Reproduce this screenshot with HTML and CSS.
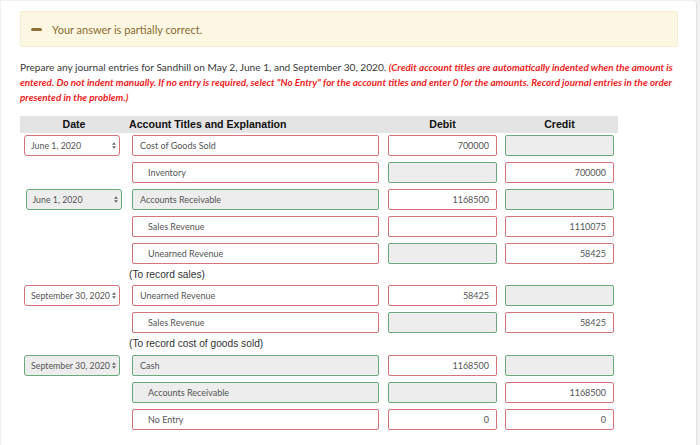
FILE: index.html
```html
<!DOCTYPE html>
<html lang="en">
<head>
<meta charset="utf-8">
<title>Journal entries</title>
<link rel="stylesheet" href="styles.css">
</head>
<body>
<div class="card">
  <div class="banner">
    <span class="minus"></span>
    <span class="banner-text">Your answer is partially correct.</span>
  </div>
  <p class="instructions">Prepare any journal entries for Sandhill on May 2, June 1, and September 30, 2020. <em class="note">(Credit account titles are automatically indented when the amount is entered. Do not indent manually. If no entry is required, select "No Entry" for the account titles and enter 0 for the amounts. Record journal entries in the order presented in the problem.)</em></p>

  <div class="journal">
    <div class="th th-center">Date</div>
    <div class="th th-left">Account Titles and Explanation</div>
    <div class="th th-center">Debit</div>
    <div class="th th-center">Credit</div>

    <!-- Row 1 -->
    <div class="cell"><div class="select bad"><span>June 1, 2020</span><svg class="arrows" viewBox="0 0 5 8"><path d="M2.5 0 L5 3 L0 3 Z M2.5 8 L5 5 L0 5 Z"/></svg></div></div>
    <div class="cell"><div class="field acct bad">Cost of Goods Sold</div></div>
    <div class="cell"><div class="field bad num">700000</div></div>
    <div class="cell"><div class="field good"></div></div>

    <!-- Row 2 -->
    <div class="cell"></div>
    <div class="cell"><div class="field acct bad indent">Inventory</div></div>
    <div class="cell"><div class="field good"></div></div>
    <div class="cell"><div class="field bad num">700000</div></div>

    <!-- Row 3 -->
    <div class="cell"><div class="select good shift"><span>June 1, 2020</span><svg class="arrows" viewBox="0 0 5 8"><path d="M2.5 0 L5 3 L0 3 Z M2.5 8 L5 5 L0 5 Z"/></svg></div></div>
    <div class="cell"><div class="field acct good">Accounts Receivable</div></div>
    <div class="cell"><div class="field bad num">1168500</div></div>
    <div class="cell"><div class="field good"></div></div>

    <!-- Row 4 -->
    <div class="cell"></div>
    <div class="cell"><div class="field acct bad indent">Sales Revenue</div></div>
    <div class="cell"><div class="field bad"></div></div>
    <div class="cell"><div class="field bad num">1110075</div></div>

    <!-- Row 5 -->
    <div class="cell"></div>
    <div class="cell"><div class="field acct bad indent">Unearned Revenue</div></div>
    <div class="cell"><div class="field good"></div></div>
    <div class="cell"><div class="field bad num">58425</div></div>

    <div class="explain">(To record sales)</div>

    <!-- Row 6 -->
    <div class="cell"><div class="select bad"><span>September 30, 2020</span><svg class="arrows" viewBox="0 0 5 8"><path d="M2.5 0 L5 3 L0 3 Z M2.5 8 L5 5 L0 5 Z"/></svg></div></div>
    <div class="cell"><div class="field acct bad">Unearned Revenue</div></div>
    <div class="cell"><div class="field bad num">58425</div></div>
    <div class="cell"><div class="field good"></div></div>

    <!-- Row 7 -->
    <div class="cell"></div>
    <div class="cell"><div class="field acct bad indent">Sales Revenue</div></div>
    <div class="cell"><div class="field good"></div></div>
    <div class="cell"><div class="field bad num">58425</div></div>

    <div class="explain">(To record cost of goods sold)</div>

    <!-- Row 8 -->
    <div class="cell"><div class="select good"><span>September 30, 2020</span><svg class="arrows" viewBox="0 0 5 8"><path d="M2.5 0 L5 3 L0 3 Z M2.5 8 L5 5 L0 5 Z"/></svg></div></div>
    <div class="cell"><div class="field acct good">Cash</div></div>
    <div class="cell"><div class="field bad num">1168500</div></div>
    <div class="cell"><div class="field good"></div></div>

    <!-- Row 9 -->
    <div class="cell"></div>
    <div class="cell"><div class="field acct good indent">Accounts Receivable</div></div>
    <div class="cell"><div class="field good"></div></div>
    <div class="cell"><div class="field bad num">1168500</div></div>

    <!-- Row 10 -->
    <div class="cell"></div>
    <div class="cell"><div class="field acct bad indent">No Entry</div></div>
    <div class="cell"><div class="field bad num">0</div></div>
    <div class="cell"><div class="field bad num">0</div></div>
  </div>
</div>
</body>
</html>
```

FILE: styles.css
```css
html, body {
  margin: 0;
  padding: 0;
}
body {
  background: #f1f1f1;
  font-family: Lato, "Open Sans", sans-serif;
  color: #333;
  height: 445px;
  overflow: hidden;
}
.card {
  margin: 1px 3px 0 1px;
  background: #fff;
  border-right: 1px solid #e3e3e3;
  border-top-right-radius: 4px;
  padding: 10px 18px 20px 19px;
  min-height: 460px;
}
.banner {
  display: flex;
  align-items: center;
  height: 34px;
  background: #fbf7e2;
  border: 1px solid #f6eecf;
  border-radius: 2px;
}
.minus {
  display: block;
  width: 11px;
  height: 3px;
  border-radius: 2px;
  background: #8e6f34;
  margin-left: 10px;
  margin-right: 10px;
}
.banner-text {
  font-size: 11px;
  color: #8a6b33;
}
.instructions {
  margin: 13px -10px 10.6px 0;
  font-size: 10.15px;
  line-height: 15px;
  color: #3a3a3a;
}
.note {
  color: #f01c24;
  font-style: italic;
  font-weight: bold;
  font-size: 9.88px;
}
.journal {
  display: grid;
  grid-template-columns: 108px 256px 117px 117px;
  width: 598px;
}
.th {
  background: #e4e4e4;
  height: 17px;
  line-height: 17px;
  font-family: "Liberation Sans", Arial, sans-serif;
  font-weight: bold;
  font-size: 10.6px;
  color: #111;
}
.th-center { text-align: center; }
.th-left { padding-left: 1px; }
.cell {
  padding: 2.9px 0 2.9px 4px;
  height: 21px;
}
.field, .select {
  box-sizing: border-box;
  height: 21px;
  border: 1px solid;
  border-radius: 2px;
  font-size: 9px;
  color: #555;
  display: flex;
  align-items: center;
  padding: 0 7px;
  white-space: nowrap;
}
.field { width: 109px; }
.field.acct { width: 247px; }
.field.indent { padding-left: 15px; }
.field.num { justify-content: flex-end; }
.bad {
  border-color: #d8737a;
  background: #fff;
}
.good {
  border-color: #68aa7c;
  background: #ededed;
}
.select {
  width: 96px;
  border-radius: 3px;
  justify-content: space-between;
  padding: 0 3px 0 6px;
  font-size: 8.8px;
}
.select.shift { margin-left: 1.5px; }
.arrows {
  width: 4px;
  height: 7px;
  fill: #666;
  flex: none;
}
.explain {
  grid-column: 1 / -1;
  height: 16px;
  line-height: 16px;
  font-family: "Liberation Sans", Arial, sans-serif;
  font-size: 10.2px;
  color: #333;
  padding-left: 109px;
}
```
